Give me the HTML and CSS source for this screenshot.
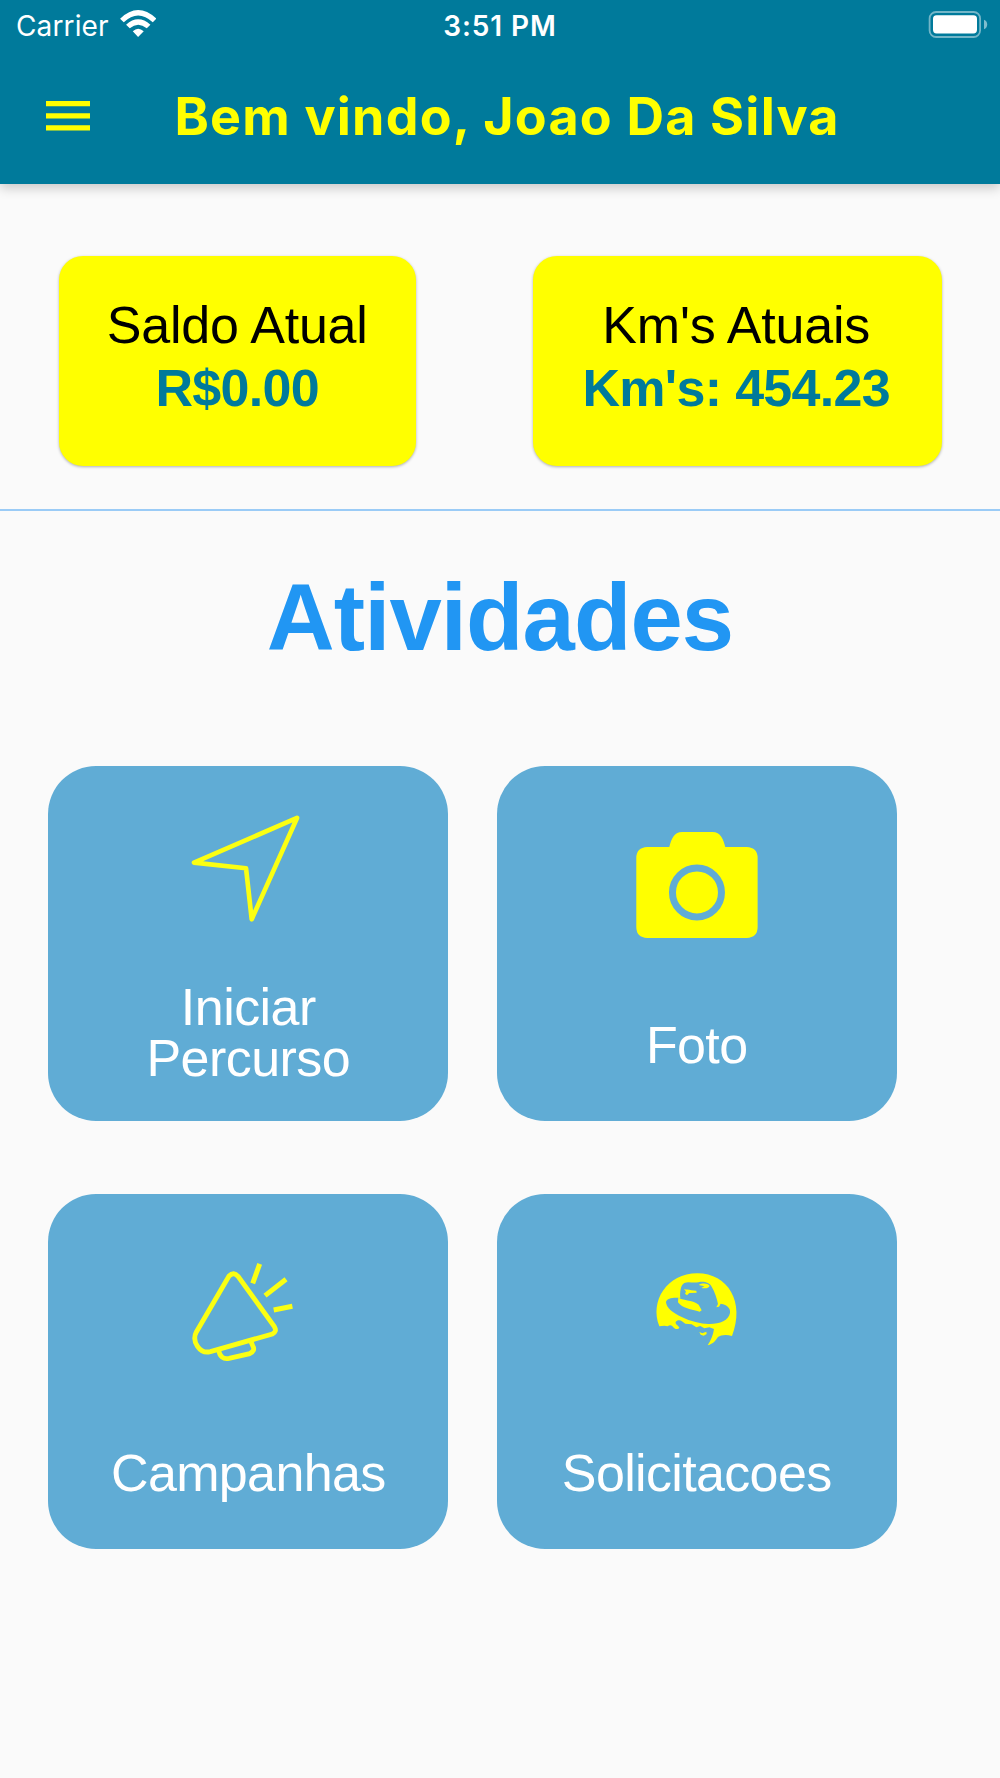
FILE: index.html
```html
<!DOCTYPE html>
<html lang="pt-BR">
<head>
<meta charset="utf-8">
<title>Atividades</title>
<link rel="stylesheet" href="styles.css">
</head>
<body>
<header class="app-bar">
  <div class="status">
    <div class="status-left">
      <span class="carrier">Carrier</span>
      <svg class="wifi" viewBox="0 0 109 81" aria-hidden="true">
        <path fill="#fff" d="M0 26Q54-26 109 26L98 37Q54-4 11 37ZM18 44Q54 12 91 44L80 55Q54 34 29 55ZM38 64Q54 49 71 64L54 81Z"/>
      </svg>
    </div>
    <span class="time">3:51 PM</span>
    <div class="status-right">
      <svg class="battery" viewBox="0 0 60 28" aria-hidden="true">
        <rect x="1.6" y="1" width="50.5" height="25" rx="6.5" fill="none" stroke="#fff" stroke-opacity=".45" stroke-width="1.8"/>
        <rect x="5" y="4.2" width="44" height="18.2" rx="3.6" fill="#fff"/>
        <path d="M56 8.7Q59.2 10 59.2 13.4T56 18.2Z" fill="#fff" fill-opacity=".5"/>
      </svg>
    </div>
  </div>
  <div class="toolbar">
    <svg class="menu" viewBox="0 0 44 30" aria-hidden="true">
      <path fill="#ff0" d="M0 0H44V5.2H0ZM0 12.2H44V17.4H0ZM0 24.3H44V29.5H0Z"/>
    </svg>
    <h1 class="title">Bem vindo, Joao Da Silva</h1>
  </div>
</header>
<main>
  <section class="summary">
    <div class="card card-balance">
      <div class="card-label">Saldo Atual</div>
      <div class="card-value">R$0.00</div>
    </div>
    <div class="card card-km">
      <div class="card-label">Km's Atuais</div>
      <div class="card-value">Km's: 454.23</div>
    </div>
  </section>
  <h2 class="heading">Atividades</h2>
  <section class="tiles">
    <div class="tile">
      <svg class="icon" viewBox="0 0 140 160" aria-hidden="true">
        <g transform="translate(1.7 4.3) scale(.33333)">
          <path d="M352 53L43 187L199 204L216 357Z" fill="none" stroke="#fbff12" stroke-width="14" stroke-linejoin="round"/>
        </g>
      </svg>
      <div class="label label-double">Iniciar<br>Percurso</div>
    </div>
    <div class="tile">
      <svg class="icon" viewBox="0 0 140 160" aria-hidden="true">
        <g transform="translate(-6.7 24.3) scale(.33333)">
          <path fill="#ff0" d="M81 80H147C153 58 160 35 186 35H276C302 35 309 58 315 80H379Q412 82 412 113V320Q412 351 379 353H81Q48 351 48 320V113Q48 82 81 80Z"/>
          <circle cx="230" cy="216.500" r="73.500" fill="none" stroke="#60acd5" stroke-width="21"/>
        </g>
      </svg>
      <div class="label">Foto</div>
    </div>
    <div class="tile">
      <svg class="icon" viewBox="0 0 140 160" aria-hidden="true">
        <g transform="translate(1.7 27.3) scale(.33333)" fill="none" stroke="#fbff12" stroke-width="14.500">
          <path d="M148 74L50 242C35 270 60 309 92 301L278 248Q293 241 284 226L175 75Q162 60 148 74Z"/>
          <path d="M117 297Q122 326 148 321L210 307Q228 298 219 283L213 269"/>
          <path d="M240 38L219 96M319 84L256 133M338 165L282 176" stroke-width="15"/>
        </g>
      </svg>
      <div class="label">Campanhas</div>
    </div>
    <div class="tile">
      <svg class="icon" viewBox="0 0 140 160" aria-hidden="true">
        <g transform="translate(14 32.300) scale(.33333)">
          <path fill="#ff0" d="M55 210C25 135 78 51 169 51C261 51 313 138 273 239C258 234 240 235 231 242C224 253 217 262 200 267C211 249 216 237 219 218L205 213L190 216L178 209L166 213L152 204L133 202L125 196C118 191 109 190 104 197C102 204 114 209 115 214C111 220 102 220 97 213C93 207 87 205 80 210L70 208Z"/>
          <path fill="#60acd5" d="M75 137C78 126 95 123 118 125C116 109 119 85 130 80C143 75 155 81 172 78C188 74 206 79 212 91C221 106 228 126 231 143L226 153L234 151L239 142C260 146 269 156 267 170C263 193 235 204 202 203C158 202 76 171 75 137Z"/>
          <path fill="#ff0" d="M112 123C123 134 153 130 173 145L182 162L176 166C150 158 124 157 111 138ZM129 97C136 101 142 98 151 102L166 103L167 109L145 110L138 117L132 112L135 106ZM173 86C183 80 199 80 206 88C203 97 192 96 181 95L190 90ZM175 227L184 231L196 226L197 233L188 238L179 235Z"/>
        </g>
      </svg>
      <div class="label">Solicitacoes</div>
    </div>
  </section>
</main>
</body>
</html>
```
FILE: styles.css
```css
* {
  box-sizing: border-box;
}

body {
  margin: 0;
  min-height: 1778px;
  background: #fafafa;
  font-family: "Liberation Sans", Arial, sans-serif;
}

svg {
  display: block;
  flex: none;
}

/* App bar */
.app-bar {
  height: 183.5px;
  background: #007a9b;
  box-shadow: 0 4px 11px rgba(0, 0, 0, 0.2);
  font-family: Inter, sans-serif;
}

.status {
  display: grid;
  grid-template-columns: 1fr auto 1fr;
  height: 53px;
  padding: 9px 12px 0 16px;
  color: #fff;
  font-size: 28px;
  line-height: 34px;
}

.status-left {
  display: flex;
  gap: 11px;
}

.carrier {
  letter-spacing: 0.13px;
}

.wifi {
  width: 36.5px;
  height: 27px;
  margin-top: 1px;
}

.time {
  padding-right: 4px;
  font-weight: 600;
  letter-spacing: 0.9px;
}

.status-right {
  display: flex;
  justify-content: flex-end;
}

.battery {
  width: 60px;
  height: 28px;
  margin-top: 1.5px;
}

.toolbar {
  display: flex;
  align-items: flex-start;
  padding: 32px 0 0 46px;
}

.menu {
  width: 44px;
  height: 30px;
  margin-top: 16px;
}

.title {
  margin: 0 0 0 84.5px;
  color: #ff0;
  font-size: 52px;
  font-weight: 700;
  line-height: 63px;
  letter-spacing: 1.2px;
  white-space: nowrap;
}

/* Balance and distance */
.summary {
  display: flex;
  justify-content: space-between;
  height: 327.3px;
  padding: 72.5px 58.5px 0;
  border-bottom: 2px solid #9acbf6;
}

.card {
  height: 210px;
  padding-top: 38px;
  border-radius: 24px;
  background: #ff0;
  box-shadow: 0 1px 3px rgba(0, 0, 0, 0.3);
  font-size: 52px;
  line-height: 63px;
  text-align: center;
}

.card-balance {
  width: 357.5px;
}

.card-km {
  width: 408.5px;
}

.card-label {
  color: #000;
  letter-spacing: -0.2px;
}

.card-value {
  color: #007a9b;
  font-weight: 700;
  letter-spacing: -0.68px;
}

.card-km .card-label,
.card-km .card-value {
  margin-left: -2px;
}

/* Activities */
.heading {
  margin: 53px 0 0;
  color: #2196f3;
  font-size: 94px;
  line-height: 108px;
  letter-spacing: -0.9px;
  text-align: center;
}

.tiles {
  display: grid;
  grid-template-columns: 400px 400px;
  grid-auto-rows: 355.7px;
  column-gap: 48.4px;
  row-gap: 72.2px;
  padding: 94px 0 0 48.3px;
}

.tile {
  display: flex;
  flex-direction: column;
  align-items: center;
  padding-top: 30px;
  border-radius: 48px;
  background: #60acd5;
}

.icon {
  width: 140px;
  height: 160px;
}

.label {
  margin-top: 64.7px;
  color: #fff;
  font-size: 52px;
  line-height: 51px;
  letter-spacing: -0.65px;
  text-align: center;
}

.label-double {
  margin-top: 26px;
  letter-spacing: -0.55px;
}
```
